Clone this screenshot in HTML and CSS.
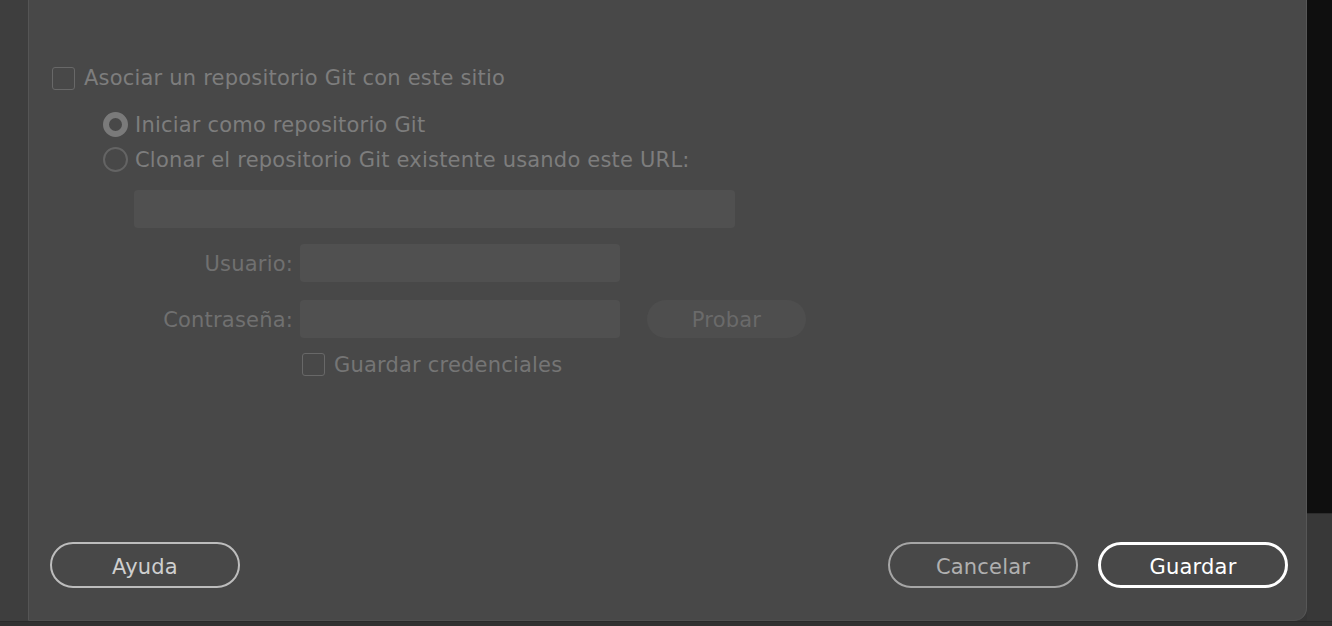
FILE: index.html
```html
<!DOCTYPE html>
<html lang="es">
<head>
<meta charset="utf-8">
<title>Git</title>
<link rel="stylesheet" href="styles.css">
</head>
<body>
<div class="screen">
  <div class="row">
    <div class="side-left"></div>
    <div class="dialog">
      <div class="content">
        <label class="check main-check"><span class="box"></span><span class="t">Asociar un repositorio Git con este sitio</span></label>
        <div class="options">
          <label class="radio-row"><span class="radio on"></span><span class="t">Iniciar como repositorio Git</span></label>
          <label class="radio-row"><span class="radio"></span><span class="t">Clonar el repositorio Git existente usando este URL:</span></label>
          <div class="url-field"></div>
          <div class="cred">
            <span class="lbl">Usuario:</span>
            <div class="field"></div>
            <span></span>
            <span class="lbl">Contraseña:</span>
            <div class="field"></div>
            <div class="probar">Probar</div>
            <span></span>
            <label class="check save-check"><span class="box"></span><span class="t">Guardar credenciales</span></label>
          </div>
        </div>
      </div>
      <div class="footer">
        <button class="btn help">Ayuda</button>
        <div class="right-btns">
          <button class="btn cancel">Cancelar</button>
          <button class="btn save">Guardar</button>
        </div>
      </div>
    </div>
    <div class="side-right">
      <div class="sr-top"></div>
      <div class="sr-bottom"></div>
    </div>
  </div>
  <div class="bottom-strip"></div>
</div>
</body>
</html>
```
FILE: styles.css
```css
* { box-sizing: border-box; }
html, body { margin: 0; padding: 0; }
body {
  width: 1332px;
  height: 626px;
  overflow: hidden;
  background: #353535;
  font-family: "DejaVu Sans", "Noto Sans", sans-serif;
}
.screen { display: flex; flex-direction: column; height: 626px; }
.row { display: flex; height: 621px; }
.side-left { width: 28px; background: #3e3e3e; }
.dialog {
  width: 1279px;
  background: #484848;
  border-left: 1px solid #555;
  border-right: 1px solid #575757;
  border-bottom: 1px solid #505050;
  border-bottom-right-radius: 13px;
  display: flex;
  flex-direction: column;
  justify-content: space-between;
}
.side-right { flex: 1; display: flex; flex-direction: column; }
.sr-top { height: 514px; background: #0f0f0f; border-bottom: 1px solid #2c2c2c; }
.sr-bottom { flex: 1; background: #383838; }
.bottom-strip { flex: 1; background: #313131; border-top: 1px solid #2a2a2a; }

.content {
  padding: 63px 0 0 23px;
  color: #7d7d7d;
  font-size: 21px;
  letter-spacing: 0.2px;
  line-height: 1.2;
}
.t { padding-top: 2px; }
.check { display: flex; align-items: center; gap: 9px; }
.box {
  width: 23px; height: 23px;
  border: 1.5px solid #686868;
  border-radius: 3px;
  flex: none;
}
.main-check { height: 30px; }
.options { padding: 14px 0 0 51px; }
.radio-row { display: flex; align-items: center; gap: 7px; height: 35px; }
.radio {
  width: 25px; height: 25px; border-radius: 50%;
  border: 2px solid #646464;
  flex: none;
}
.radio.on { border: 6px solid #7a7a7a; }
.url-field {
  margin: 13px 0 0 31px;
  width: 601px; height: 38px;
  background: #505050;
  border-radius: 4px;
}
.cred {
  display: grid;
  grid-template-columns: 190px 320px 186px;
  column-gap: 7px;
  row-gap: 18px;
  align-items: center;
  margin: 16px 0 0 0;
  color: #707070;
}
.lbl { text-align: right; padding-top: 4px; }
.field { height: 38px; background: #505050; border-radius: 4px; }
.probar {
  height: 38px; width: 159px; margin-left: 20px;
  background: #4e4e4e; border-radius: 19px;
  display: flex; align-items: center; justify-content: center;
  padding-top: 4px;
  color: #6a6a6a;
}
.save-check { margin-top: -5px; margin-left: 2px; color: #757575; }

.footer {
  display: flex; justify-content: space-between;
  padding: 0 18px 32px 21px;
}
.right-btns { display: flex; gap: 20px; }
.btn {
  width: 190px; height: 46px;
  border-radius: 23px;
  background: transparent;
  font-family: inherit;
  font-size: 21px;
  letter-spacing: 0.2px;
  padding: 3px 0 0;
  display: flex; align-items: center; justify-content: center;
}
.help { border: 2px solid #bdbdbd; color: #cfcfcf; }
.cancel { border: 2px solid #a6a6a6; color: #b0b0b0; }
.save { border: 3px solid #ffffff; color: #ffffff; }
```
